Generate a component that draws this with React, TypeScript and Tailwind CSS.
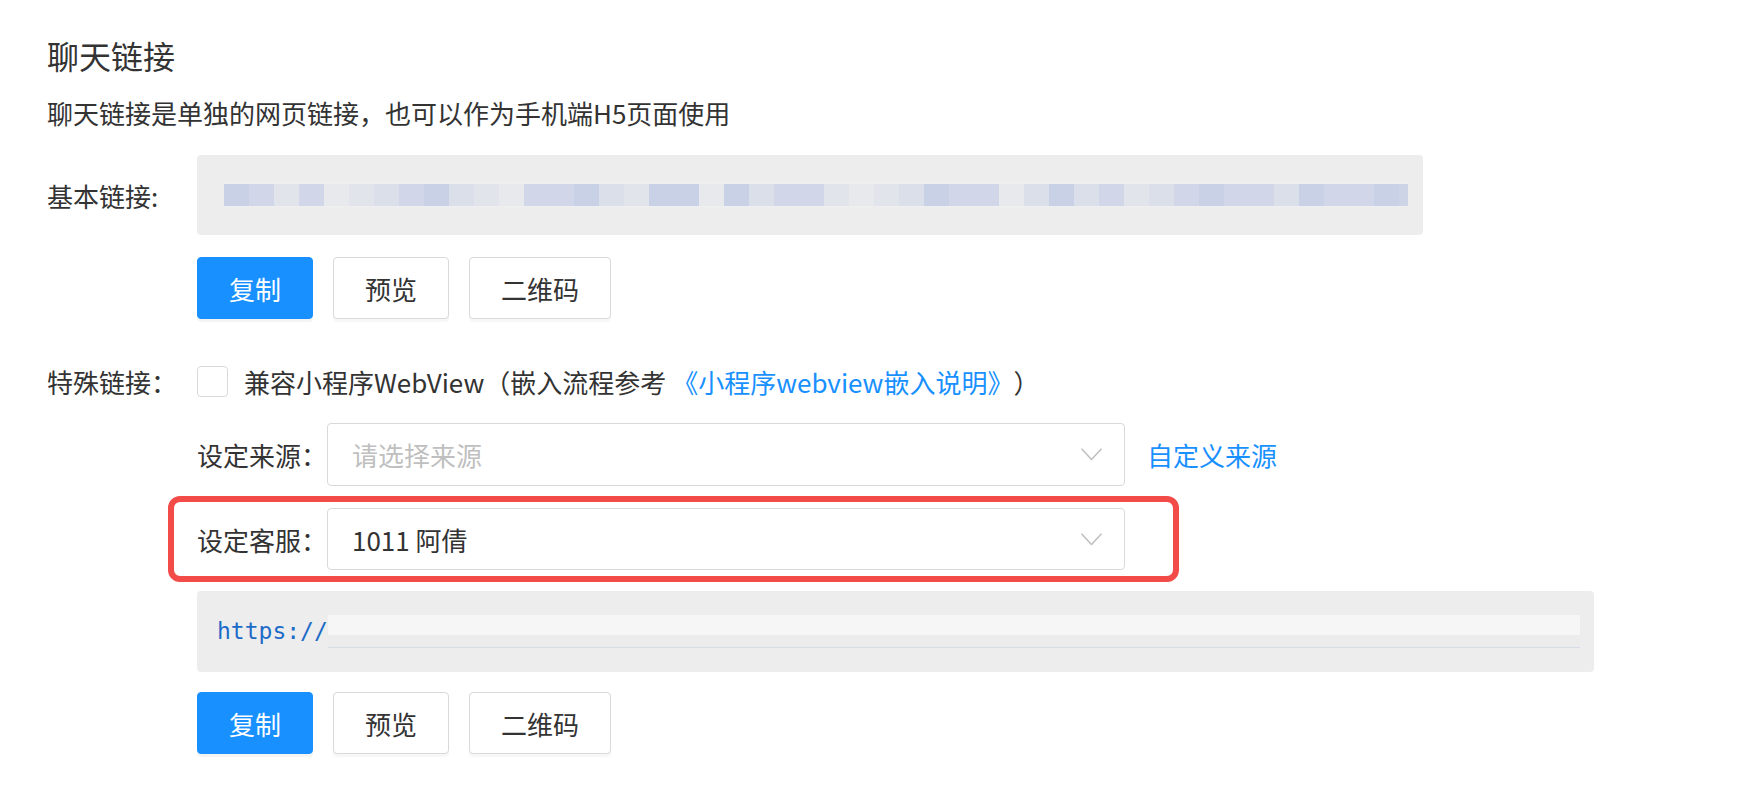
import React from "react";

const BLOCK_COLORS = [
  "bg-[#c8d1e6]",
  "bg-[#d1d7e8]",
  "bg-[#dadfea]",
  "bg-[#e2e4ec]",
  "bg-[#e8e9ed]",
];

const PATTERN = [
  0, 1, 3, 1, 4, 3, 2, 1, 0, 2, 3, 4, 1, 1, 0, 2, 3, 0, 0, 4, 0, 2, 1, 1, 3, 4, 3, 2, 0, 1,
  1, 4, 2, 0, 2, 1, 3, 2, 1, 0, 1, 1, 2, 0, 1, 1, 0,
];

function Button({ primary, children }: { primary?: boolean; children: React.ReactNode }) {
  return (
    <button
      type="button"
      className={
        primary
          ? "h-[62px] rounded-[4px] border border-[#1890ff] bg-[#1890ff] px-[31px] text-[26px] text-white shadow-[0_3px_0_rgba(0,0,0,0.045)]"
          : "h-[62px] rounded-[4px] border border-[#d9d9d9] bg-white px-[31px] text-[26px] text-[#333] shadow-[0_3px_0_rgba(0,0,0,0.03)]"
      }
    >
      {children}
    </button>
  );
}

function ButtonRow() {
  return (
    <div className="flex gap-[20px]">
      <Button primary>复制</Button>
      <Button>预览</Button>
      <Button>二维码</Button>
    </div>
  );
}

function Chevron() {
  return (
    <svg width="21" height="13" viewBox="0 0 21 13" fill="none">
      <path d="M1 1.2 L10.5 11.5 L20 1.2" stroke="#c0c0c0" strokeWidth="1.6" strokeLinecap="round" strokeLinejoin="round" />
    </svg>
  );
}

function Select({ value, placeholder }: { value?: string; placeholder?: string }) {
  return (
    <div className="flex h-full w-[798px] items-center justify-between rounded-[4px] border border-[#d9d9d9] bg-white pl-[24px] pr-[22px] text-[26px]">
      {value ? (
        <span className="text-[#333]">{value}</span>
      ) : (
        <span className="text-[#bfbfbf]">{placeholder}</span>
      )}
      <Chevron />
    </div>
  );
}

export default function App() {
  return (
    <div className="min-h-[786px] bg-white pl-[47px] pt-[31px] font-['Noto_Sans_CJK_SC',sans-serif] text-[#333]">
      <h1 className="text-[32px] font-normal leading-[48px]">聊天链接</h1>
      <p className="mt-[14px] text-[26px] leading-[40px]">
        聊天链接是单独的网页链接，也可以作为手机端H5页面使用
      </p>

      <div className="mt-[22px] flex">
        <div className="flex h-[80px] w-[150px] items-center text-[26px]">基本链接:</div>
        <div className="flex flex-col">
          <div className="flex h-[80px] w-[1226px] items-center rounded-[4px] bg-[#ededed] pl-[27px]">
            <div className="flex h-[24px] items-center bg-[#efeff1] blur-[0.6px]">
              {PATTERN.map((c, i) => (
                <div key={i} className={"h-[22px] w-[25px] " + BLOCK_COLORS[c]} />
              ))}
              <div className="h-[22px] w-[9px] bg-[#cdd4e6]" />
            </div>
          </div>
          <div className="mt-[22px]">
            <ButtonRow />
          </div>
        </div>
      </div>

      <div className="mt-[42px] flex">
        <div className="flex h-[40px] w-[150px] items-center text-[26px]">特殊链接：</div>
        <div className="flex flex-col">
          <div className="flex h-[40px] items-center text-[26px]">
            <span className="h-[31px] w-[31px] rounded-[4px] border border-[#d9d9d9] bg-white" />
            <span className="ml-[16px]">兼容小程序WebView（嵌入流程参考 </span>
            <span className="ml-[6px] text-[#1890ff]">《小程序webview嵌入说明》</span>
            <span>）</span>
          </div>

          <div className="mt-[22px] flex h-[63px] items-center text-[26px]">
            <span className="w-[130px]">设定来源：</span>
            <Select placeholder="请选择来源" />
            <span className="ml-[22px] text-[#1890ff]">自定义来源</span>
          </div>

          <div className="relative mt-[22px] flex h-[62px] w-fit items-center text-[26px]">
            <span className="w-[130px]">设定客服：</span>
            <Select value="1011 阿倩" />
            <div className="pointer-events-none absolute bottom-[-12px] left-[-29px] right-[-54px] top-[-12px] rounded-[12px] border-[6px] border-[#f24b48]" />
          </div>

          <div className="mt-[21px] flex h-[81px] w-[1397px] items-center rounded-[4px] bg-[#ededed] pl-[20px] pr-[14px]">
            <span className="font-['DejaVu_Sans_Mono',monospace] text-[23px] text-[#1d6bc8]">https://</span>
            <div className="flex h-[33px] flex-1 flex-col">
              <div className="h-[20px] bg-[#f6f6f6]" />
              <div className="h-[12px] bg-[#ececec]" />
              <div className="h-[1px] bg-[#d6dce7]" />
            </div>
          </div>

          <div className="mt-[20px]">
            <ButtonRow />
          </div>
        </div>
      </div>
    </div>
  );
}
